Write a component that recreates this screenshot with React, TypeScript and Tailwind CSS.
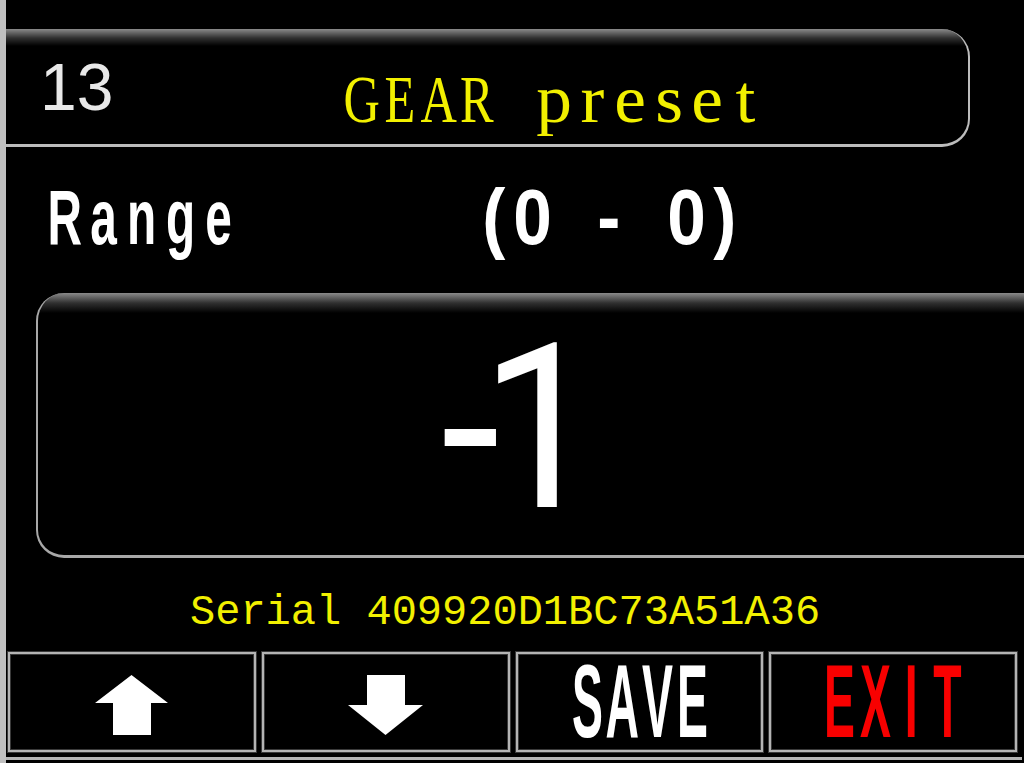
type MonoProps = {
  text: string;
  cell: string;
  glyph?: string;
};

// Fixed-pitch text: every character gets its own cell, glyph centred in it.
function Mono({ text, cell, glyph = "" }: MonoProps) {
  return (
    <span className="inline-flex">
      {Array.from(text).map((ch, i) => (
        <span key={`${i}-${ch}`} className={`inline-flex justify-center ${cell}`}>
          <span className={`inline-block whitespace-pre ${glyph}`}>{ch}</span>
        </span>
      ))}
    </span>
  );
}

function ArrowUp() {
  return (
    <svg width="73" height="60" viewBox="0 0 73 60">
      <path d="M36.5 0 73 28H56V60H18V28H0Z" fill="#ffffff" />
    </svg>
  );
}

function ArrowDown() {
  return (
    <svg width="75" height="60" viewBox="0 0 75 60">
      <path d="M19 0H57V30H75L37.5 60 0 30H19Z" fill="#ffffff" />
    </svg>
  );
}

const keyClass =
  "flex h-[100px] items-center justify-center border-2 border-[#b4b4b4] bg-black shadow-[0_0_0_1px_#3a3a3a,inset_0_0_0_1px_#3a3a3a]";

export default function App() {
  return (
    <div className="flex h-[763px] w-[1024px] overflow-hidden bg-black">
      <div className="w-[6px] shrink-0 bg-[#c0c0c0]" />

      <div className="flex min-w-0 flex-1 flex-col pt-[29px]">
        {/* parameter header */}
        <div className="flex h-[118px] w-[964px] shrink-0 items-center rounded-r-[28px] border-r-2 border-b-[3px] border-[#bcbcbc] bg-[linear-gradient(to_bottom,#8a8a8a,#303030_9px,#000000_17px)] pl-[34px]">
          <span className="font-['Liberation_Sans',sans-serif] text-[66px] leading-none text-[#e8e8e8]">
            13
          </span>
          <span className="ml-[229px] mt-[24px] flex font-['Liberation_Serif',serif] text-[68px] leading-none text-[#f2f000]">
            <Mono text="GEAR" cell="w-[38.4px]" glyph="scale-x-[0.74]" />
            <Mono text=" preset" cell="w-[38.4px]" glyph="scale-x-[1.05]" />
          </span>
        </div>

        {/* allowed range */}
        <div className="flex h-[146px] shrink-0 items-center pb-[5px] pl-[40px] font-['Liberation_Sans',sans-serif] text-[77px] font-bold leading-none text-white">
          <Mono text="Range" cell="w-[38.4px]" glyph="scale-x-[0.62]" />
          <span className="ml-[237px]">
            <Mono text="(0 - 0)" cell="w-[38.4px]" glyph="scale-x-[0.9]" />
          </span>
        </div>

        {/* current value */}
        <div className="ml-[30px] flex h-[265px] w-[988px] shrink-0 items-center justify-center rounded-l-[28px] border-l-2 border-b-[3px] border-[#a8a8a8] bg-[linear-gradient(to_bottom,#8a8a8a,#303030_10px,#000000_20px)] pt-[8px] pr-[40px]">
          <span className="inline-block scale-y-[1.07] font-['Roboto',sans-serif] text-[215px] leading-none tracking-[-20px] text-white">
            -1
          </span>
        </div>

        <div className="flex h-[94px] shrink-0 items-center pt-[15px] pl-[184px] font-['Liberation_Mono',monospace] text-[42px] leading-none text-[#f2f000]">
          Serial 409920D1BC73A51A36
        </div>

        {/* soft keys */}
        <div className="ml-[2px] grid h-[100px] w-[1009px] shrink-0 grid-cols-4 gap-[6px]">
          <div className={`${keyClass} pt-[6px]`}>
            <ArrowUp />
          </div>
          <div className={`${keyClass} pt-[6px]`}>
            <ArrowDown />
          </div>
          <div className={keyClass}>
            <span className="font-['Liberation_Sans',sans-serif] text-[103px] font-bold leading-[74px] text-white">
              <Mono text="SAVE" cell="w-[35px]" glyph="scale-x-[0.45]" />
            </span>
          </div>
          <div className={keyClass}>
            <span className="font-['Liberation_Sans',sans-serif] text-[103px] font-bold leading-[74px] text-[#f80000]">
              <Mono text="EXIT" cell="w-[36px]" glyph="scale-x-[0.45]" />
            </span>
          </div>
        </div>

        <div className="mt-[5px] h-[3px] w-[1016px] shrink-0 bg-[#b4b4b4]" />
      </div>
    </div>
  );
}
